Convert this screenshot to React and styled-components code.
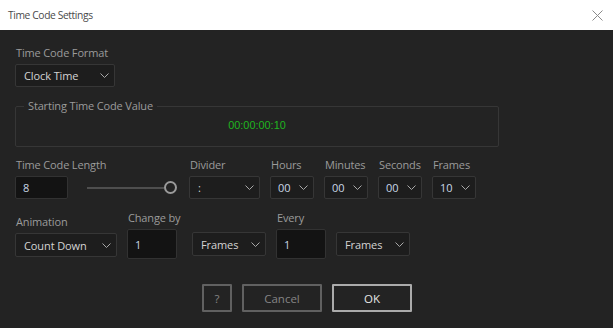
import React from "react";
import styled, { createGlobalStyle } from "styled-components";

const Global = createGlobalStyle`
  html, body { margin: 0; padding: 0; background: #232323; }
  body { width: 613px; height: 328px; overflow: hidden; font-family: "Open Sans", "Noto Sans", sans-serif; }
  * { box-sizing: border-box; }
`;

const Window = styled.div`
  width: 613px;
  height: 328px;
  display: flex;
  flex-direction: column;
  background: #232323;
`;

const TitleBar = styled.div`
  height: 30px;
  flex: none;
  background: #ffffff;
  display: flex;
  align-items: center;
  justify-content: space-between;
  padding: 0 10px 0 8px;
`;

const Title = styled.div`
  font-size: 10.3px;
  color: #4a4a4a;
  letter-spacing: -0.4px;
`;

const CloseIcon = styled.svg`
  width: 11px;
  height: 11px;
  display: block;
`;

const Body = styled.div`
  padding: 15px 15px 0;
  display: flex;
  flex-direction: column;
`;

const Field = styled.div`
  display: flex;
  flex-direction: column;
  gap: 3px;
  width: ${(p) => (p.$w ? `${p.$w}px` : "auto")};
  flex: none;
  margin-left: ${(p) => p.$ml || 0}px;
  margin-top: ${(p) => p.$mt || 0}px;
`;

const Label = styled.div`
  font-size: 11px;
  letter-spacing: -0.15px;
  line-height: 16px;
  height: 16px;
  color: #9b9b9b;
  padding-left: 1px;
  white-space: nowrap;
`;

const SelectBox = styled.div`
  width: ${(p) => p.$w}px;
  height: ${(p) => p.$h || 23}px;
  background: #1d1d1d;
  border: 1px solid #363636;
  border-radius: 2px;
  display: flex;
  align-items: center;
  justify-content: space-between;
  padding: 0 5px 0 ${(p) => p.$pl || 8}px;
  font-size: 11px;
  letter-spacing: -0.1px;
  color: ${(p) => (p.$num ? "#c9d7e6" : "#d4d4d4")};
  white-space: nowrap;
`;

const Chevron = styled.svg`
  width: 9px;
  height: 5px;
  display: block;
  flex: none;
`;

const Input = styled.div`
  width: ${(p) => p.$w}px;
  height: ${(p) => p.$h || 23}px;
  background: #131313;
  border: 1px solid #323232;
  border-radius: 2px;
  display: flex;
  align-items: center;
  padding-left: 7px;
  font-size: 11px;
  color: #c9d7e6;
`;

const GroupBox = styled.fieldset`
  margin: 11px 0 0;
  width: 484px;
  border: 1px solid #363636;
  border-radius: 2px;
  padding: 3px 8px 13px;
  min-inline-size: auto;
`;

const Legend = styled.legend`
  padding: 0 4px;
  font-size: 11px;
  letter-spacing: -0.15px;
  line-height: 16px;
  color: #9b9b9b;
`;

const TimeCode = styled.div`
  text-align: center;
  font-family: "Liberation Sans", Arial, sans-serif;
  font-size: 10.9px;
  line-height: 16px;
  color: #1fb51f;
`;

const Row = styled.div`
  display: flex;
  align-items: flex-start;
  margin-top: ${(p) => p.$mt}px;
`;

const Slider = styled.div`
  width: 90px;
  height: 23px;
  margin: 19px 0 0 19px;
  display: flex;
  align-items: center;
  flex: none;
`;

const Track = styled.div`
  flex: 1;
  height: 2px;
  background: #4e4e4e;
`;

const Knob = styled.div`
  width: 13px;
  height: 13px;
  border-radius: 50%;
  border: 2px solid #9a9a9a;
  background: #232323;
  flex: none;
`;

const Spacer = styled.div`
  flex: none;
  margin-left: ${(p) => p.$ml}px;
  margin-top: ${(p) => p.$mt}px;
`;

const ButtonBar = styled.div`
  display: flex;
  justify-content: center;
  gap: 10px;
  margin-top: 25px;
  padding-left: 1px;
`;

const Button = styled.div`
  width: ${(p) => p.$w}px;
  height: 28px;
  border: 2px solid ${(p) => (p.$primary ? "#ababab" : "#616161")};
  border-radius: 1px;
  display: flex;
  align-items: center;
  justify-content: center;
  font-size: 11.5px;
  color: ${(p) => (p.$primary ? "#e6e6e6" : "#858585")};
`;

const Down = () => (
  <Chevron viewBox="0 0 9 5">
    <polyline points="0.5,0.5 4.5,4.5 8.5,0.5" fill="none" stroke="#a8a8a8" strokeWidth="1" />
  </Chevron>
);

const Select = ({ w, h, pl, num, children }) => (
  <SelectBox $w={w} $h={h} $pl={pl} $num={num}>
    <span>{children}</span>
    <Down />
  </SelectBox>
);

export default function App() {
  return (
    <Window>
      <Global />
      <TitleBar>
        <Title>Time Code Settings</Title>
        <CloseIcon viewBox="0 0 11 11">
          <path d="M0.5 0.5 L10.5 10.5 M10.5 0.5 L0.5 10.5" stroke="#8a8a8a" strokeWidth="1" fill="none" />
        </CloseIcon>
      </TitleBar>
      <Body>
        <Field $w={100}>
          <Label>Time Code Format</Label>
          <Select w={100}>Clock Time</Select>
        </Field>
        <GroupBox>
          <Legend>Starting Time Code Value</Legend>
          <TimeCode>00:00:00:10</TimeCode>
        </GroupBox>
        <Row $mt={10}>
          <Field $w={53}>
            <Label>Time Code Length</Label>
            <Input $w={53}>8</Input>
          </Field>
          <Slider>
            <Track />
            <Knob />
          </Slider>
          <Field $w={71} $ml={12}>
            <Label>Divider</Label>
            <Select w={71}>:</Select>
          </Field>
          <Field $w={44} $ml={10}>
            <Label>Hours</Label>
            <Select w={44} pl={7} num>00</Select>
          </Field>
          <Field $w={44} $ml={10}>
            <Label>Minutes</Label>
            <Select w={44} pl={7} num>00</Select>
          </Field>
          <Field $w={44} $ml={10}>
            <Label>Seconds</Label>
            <Select w={44} pl={7} num>00</Select>
          </Field>
          <Field $w={44} $ml={10}>
            <Label>Frames</Label>
            <Select w={44} pl={7} num>10</Select>
          </Field>
        </Row>
        <Row $mt={11}>
          <Field $w={102} $mt={4}>
            <Label>Animation</Label>
            <Select w={102} h={24}>Count Down</Select>
          </Field>
          <Field $w={50} $ml={10}>
            <Label>Change by</Label>
            <Input $w={50} $h={30}>1</Input>
          </Field>
          <Spacer $ml={15} $mt={22}>
            <Select w={74} h={24}>Frames</Select>
          </Spacer>
          <Field $w={50} $ml={10}>
            <Label>Every</Label>
            <Input $w={50} $h={30}>1</Input>
          </Field>
          <Spacer $ml={10} $mt={22}>
            <Select w={74} h={24}>Frames</Select>
          </Spacer>
        </Row>
      </Body>
      <ButtonBar>
        <Button $w={30}>?</Button>
        <Button $w={80}>Cancel</Button>
        <Button $w={80} $primary>OK</Button>
      </ButtonBar>
    </Window>
  );
}
